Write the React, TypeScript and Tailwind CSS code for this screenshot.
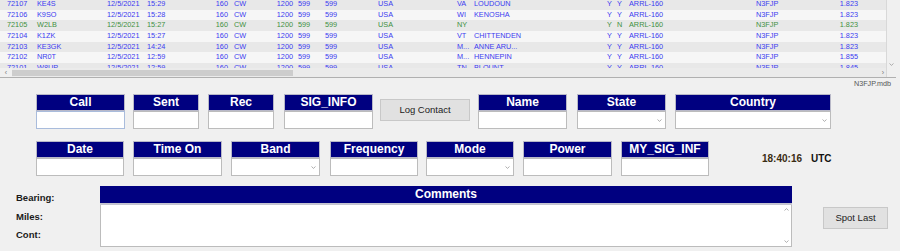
import React from "react";

type Row = {
  id: string;
  call: string;
  time: string;
  st: string;
  county: string;
  q2: string;
  f: string;
  green?: boolean;
};

const rows: Row[] = [
  { id: "72107", call: "KE4S", time: "15:29", st: "VA", county: "LOUDOUN", q2: "Y", f: "1.823" },
  { id: "72106", call: "K9SO", time: "15:28", st: "WI", county: "KENOSHA", q2: "Y", f: "1.823" },
  { id: "72105", call: "W2LB", time: "15:27", st: "NY", county: "", q2: "N", f: "1.823", green: true },
  { id: "72104", call: "K1ZK", time: "15:27", st: "VT", county: "CHITTENDEN", q2: "Y", f: "1.823" },
  { id: "72103", call: "KE3GK", time: "14:24", st: "M...", county: "ANNE ARU...", q2: "Y", f: "1.823" },
  { id: "72102", call: "NR0T", time: "12:59", st: "M...", county: "HENNEPIN", q2: "Y", f: "1.855" },
  { id: "72101", call: "W8UP", time: "12:59", st: "TN", county: "BLOUNT", q2: "Y", f: "1.845" },
];

function Chevron({ up }: { up?: boolean }) {
  return (
    <svg width="5" height="3" viewBox="0 0 5 3" className="block">
      <path
        d={up ? "M0.5 2.5 L2.5 0.6 L4.5 2.5" : "M0.5 0.5 L2.5 2.4 L4.5 0.5"}
        fill="none"
        stroke="#9a9a9a"
        strokeWidth="0.8"
      />
    </svg>
  );
}

function Field({
  label,
  className,
  select,
  focus,
}: {
  label: string;
  className: string;
  select?: boolean;
  focus?: boolean;
}) {
  return (
    <div className={`flex flex-none flex-col ${className}`}>
      <div className="h-[17px] border border-[#b8b8c8] bg-[#000080] text-center text-[12px] font-bold leading-[15px] text-white">
        {label}
      </div>
      <div
        className={`relative h-[18px] border bg-white ${
          focus ? "border-[#a9bcdc]" : "border-[#bcbcbc]"
        }`}
      >
        {select && (
          <div className="absolute right-[3px] top-[7px]">
            <Chevron />
          </div>
        )}
      </div>
    </div>
  );
}

export default function App() {
  return (
    <div className="h-[251px] w-[900px] overflow-hidden bg-[#f0f0f0] font-['Liberation_Sans',Arial,sans-serif]">
      {/* Log table */}
      <div className="flex h-[78px] w-[896px] border-b border-[#b0b0b0]">
        <div className="flex w-[886px] flex-none flex-col">
          <div className="h-[68px] overflow-hidden">
            <div className="-mt-[1px] text-[7.3px]">
              {rows.map((r, i) => (
                <div
                  key={r.id}
                  className={`flex h-[10.67px] whitespace-nowrap leading-[10.67px] ${
                    i % 2 === 0 ? "bg-[#e8e8e8]" : "bg-[#f6f6f6]"
                  } ${r.green ? "text-[#3f903f]" : "text-[#3c3cf0]"}`}
                >
                  <span className="w-[37px] flex-none pl-[7px]">{r.id}</span>
                  <span className="w-[70px] flex-none">{r.call}</span>
                  <span className="w-[40px] flex-none">12/5/2021</span>
                  <span className="w-[55px] flex-none">{r.time}</span>
                  <span className="w-[26px] flex-none text-right">160</span>
                  <span className="w-[32px] flex-none pl-[6px]">CW</span>
                  <span className="w-[33px] flex-none text-right">1200</span>
                  <span className="w-[32px] flex-none pl-[5px]">599</span>
                  <span className="w-[53px] flex-none">599</span>
                  <span className="w-[79px] flex-none">USA</span>
                  <span className="w-[17px] flex-none">{r.st}</span>
                  <span className="w-[133px] flex-none">{r.county}</span>
                  <span className="w-[10px] flex-none">Y</span>
                  <span className="w-[12px] flex-none">{r.q2}</span>
                  <span className="w-[127px] flex-none">ARRL-160</span>
                  <span className="w-[64px] flex-none">N3FJP</span>
                  <span className="w-[38px] flex-none text-right">{r.f}</span>
                </div>
              ))}
            </div>
          </div>
          {/* horizontal scrollbar */}
          <div className="flex h-[9px] items-center bg-[#ebebeb]">
            <div className="flex h-full w-[12px] items-center justify-center bg-[#f0f0f0] text-[7px] leading-none text-[#777]">
              ‹
            </div>
            <div className="h-[6px] w-[281px] bg-[#cdcdcd]" />
            <div className="flex-1" />
            <div className="mr-[2px] text-[7px] leading-none text-[#777]">›</div>
          </div>
        </div>
        {/* vertical scrollbar */}
        <div className="flex flex-1 flex-col items-center border-l border-[#d8d8d8] bg-[#f0f0f0]">
          <div className="flex-1" />
          <div className="mb-[11px]">
            <Chevron />
          </div>
        </div>
      </div>

      {/* db name */}
      <div className="flex h-[16px] justify-end pr-[9px] pt-[1px] text-[7.2px] leading-[9px] text-[#555]">
        N3FJP.mdb
      </div>

      {/* Row 1 */}
      <div className="flex h-[35px] items-start">
        <Field label="Call" className="ml-[36px] w-[89px]" focus />
        <Field label="Sent" className="ml-[8px] w-[66px]" />
        <Field label="Rec" className="ml-[9px] w-[66px]" />
        <Field label="SIG_INFO" className="ml-[10px] w-[89px]" />
        <button className="ml-[7px] mt-[5px] h-[22px] w-[90px] flex-none border border-[#c8c8c8] bg-[#e1e1e1] text-[9.5px] font-normal leading-[20px] text-[#222]">
          Log Contact
        </button>
        <Field label="Name" className="ml-[8px] w-[89px]" />
        <Field label="State" className="ml-[10px] w-[89px]" select />
        <Field label="Country" className="ml-[9px] w-[156px]" select />
      </div>

      {/* Row 2 */}
      <div className="mt-[12px] flex h-[35px] items-start">
        <Field label="Date" className="ml-[36px] w-[88px]" />
        <Field label="Time On" className="ml-[9px] w-[89px]" />
        <Field label="Band" className="ml-[9px] w-[89px]" select />
        <Field label="Frequency" className="ml-[10px] w-[88px]" />
        <Field label="Mode" className="ml-[8px] w-[88px]" select />
        <Field label="Power" className="ml-[9px] w-[89px]" />
        <Field label="MY_SIG_INF" className="ml-[9px] w-[88px]" />
        <div className="ml-[53px] mt-[12px] flex text-[10px] font-bold leading-[12px]">
          <span className="text-[#3a2c12]">18:40:16</span>
          <span className="ml-[9px] text-[#111]">UTC</span>
        </div>
      </div>

      {/* Bottom */}
      <div className="mt-[10px] flex items-start">
        <div className="flex w-[100px] flex-none flex-col pl-[16px] pt-[6px] text-[9.5px] font-bold leading-[11px] text-[#1a1a1a]">
          <span>Bearing:</span>
          <span className="mt-[8px]">Miles:</span>
          <span className="mt-[7px]">Cont:</span>
        </div>
        <div className="flex w-[692px] flex-none flex-col">
          <div className="h-[19px] border-b-2 border-[#c4c4d0] bg-[#000080] text-center text-[12px] font-bold leading-[17px] text-white">
            Comments
          </div>
          <div className="flex h-[42px] justify-end border border-t-0 border-[#bcbcbc] bg-white">
            <div className="flex w-[10px] flex-col items-center justify-between py-[3px]">
              <Chevron up />
              <Chevron />
            </div>
          </div>
        </div>
        <button className="ml-[31px] mt-[21px] h-[22px] w-[65px] flex-none border border-[#c8c8c8] bg-[#e1e1e1] text-[9.5px] font-normal leading-[20px] text-[#222]">
          Spot Last
        </button>
      </div>
    </div>
  );
}
